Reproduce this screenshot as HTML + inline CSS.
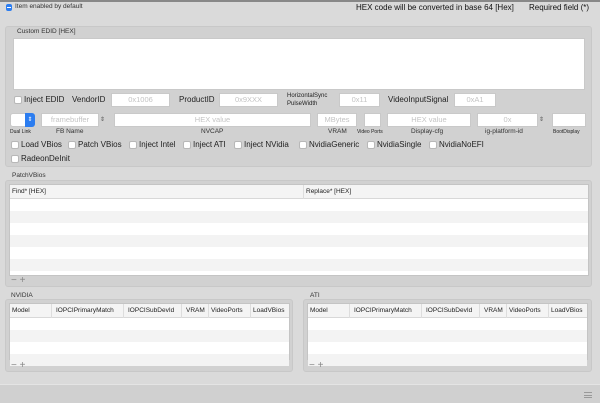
<!DOCTYPE html>
<html><head><meta charset="utf-8"><style>
*{margin:0;padding:0;box-sizing:border-box}
body{width:600px;height:403px;background:#dadada;font-family:"Liberation Sans",sans-serif;color:#222;position:relative;overflow:hidden}
.a{position:absolute;white-space:nowrap}
.box{position:absolute;background:#d1d1d1;border:1px solid #c8c8c8;border-radius:3px}
.in{position:absolute;background:#fff;border:1px solid #c9c9c9;color:#c4c4c4;font-size:7.5px;text-align:center;line-height:12px;height:14px}
.cb{position:absolute;width:8px;height:8px;background:#fff;border:1px solid #b8b8b8;border-radius:2px}
.t{font-size:8px;line-height:10px}
.s{font-size:6.5px;color:#333}
.tbl{position:absolute;background:#fff;border:1px solid #c4c4c4}
.hd{height:14px;background:#f4f4f4;border-bottom:1px solid #d8d8d8;font-size:6.5px;line-height:14px;position:relative}
.hd span{position:absolute;top:0;padding-left:4px;border-left:1px solid #ddd}
.r{height:12px}.r:nth-child(odd){background:#f3f3f3}
.pm{position:absolute;font-size:10px;color:#888}
</style></head><body>
<div class="a" style="left:0;top:0;width:600px;height:2px;background:#888"></div>
<div class="a" style="left:6px;top:4px;width:6px;height:7px;background:#2c7df0;border-radius:2px"></div>
<div class="a" style="left:7px;top:7px;width:4px;height:1px;background:#fff"></div>
<div class="a" style="left:15px;top:3px;font-size:6.5px;line-height:8px;color:#333">Item enabled by default</div>
<div class="a t" style="left:356px;top:3px;color:#111">HEX code will be converted in base 64 [Hex]</div>
<div class="a t" style="left:529px;top:3px;color:#111">Required field (*)</div>

<div class="box" style="left:5px;top:26px;width:587px;height:141px"></div>
<div class="a" style="left:17px;top:28px;font-size:6.5px;color:#333">Custom EDID [HEX]</div>
<div class="a" style="left:13px;top:38px;width:572px;height:52px;background:#fff;border:1px solid #c9c9c9"></div>
<div class="cb" style="left:14px;top:96px"></div>
<div class="a t" style="left:24px;top:95px">Inject EDID</div>
<div class="a t" style="left:72px;top:95px">VendorID</div>
<div class="in" style="left:111px;top:93px;width:59px">0x1006</div>
<div class="a t" style="left:179px;top:95px">ProductID</div>
<div class="in" style="left:219px;top:93px;width:59px">0x9XXX</div>
<div class="a" style="left:287px;top:92px;font-size:6px;line-height:8px">HorizontalSync<br>PulseWidth</div>
<div class="in" style="left:339px;top:93px;width:41px">0x11</div>
<div class="a t" style="left:388px;top:95px">VideoInputSignal</div>
<div class="in" style="left:454px;top:93px;width:42px">0xA1</div>

<div class="a" style="left:10px;top:113px;width:25px;height:14px;background:#fff;border:1px solid #c9c9c9;border-radius:3px"></div>
<div class="a" style="left:25px;top:113px;width:10px;height:14px;background:#2c7df0;border-radius:0 3px 3px 0;color:#fff;font-size:6px;text-align:center;line-height:14px">⇕</div>
<div class="in" style="left:41px;top:113px;width:58px">framebuffer</div>
<div class="a" style="left:100px;top:114px;font-size:6px;line-height:12px;color:#555">⇕</div>
<div class="in" style="left:114px;top:113px;width:197px">HEX value</div>
<div class="in" style="left:317px;top:113px;width:40px">MBytes</div>
<div class="in" style="left:364px;top:113px;width:17px"></div>
<div class="in" style="left:387px;top:113px;width:84px">HEX value</div>
<div class="in" style="left:477px;top:113px;width:61px">0x</div>
<div class="a" style="left:539px;top:114px;font-size:6px;line-height:12px;color:#555">⇕</div>
<div class="in" style="left:552px;top:113px;width:34px"></div>
<div class="a" style="left:10px;top:129px;font-size:5px">Dual Link</div>
<div class="a s" style="left:56px;top:128px">FB Name</div>
<div class="a s" style="left:201px;top:128px">NVCAP</div>
<div class="a s" style="left:328px;top:128px">VRAM</div>
<div class="a" style="left:357px;top:129px;font-size:5px">Video Ports</div>
<div class="a s" style="left:411px;top:128px">Display-cfg</div>
<div class="a s" style="left:485px;top:128px">ig-platform-id</div>
<div class="a" style="left:553px;top:129px;font-size:5px">BootDisplay</div>

<div class="cb" style="left:11px;top:141px"></div><div class="a t" style="left:21px;top:140px">Load VBios</div>
<div class="cb" style="left:68px;top:141px"></div><div class="a t" style="left:78px;top:140px">Patch VBios</div>
<div class="cb" style="left:129px;top:141px"></div><div class="a t" style="left:139px;top:140px">Inject Intel</div>
<div class="cb" style="left:183px;top:141px"></div><div class="a t" style="left:193px;top:140px">Inject ATI</div>
<div class="cb" style="left:234px;top:141px"></div><div class="a t" style="left:244px;top:140px">Inject NVidia</div>
<div class="cb" style="left:299px;top:141px"></div><div class="a t" style="left:309px;top:140px">NvidiaGeneric</div>
<div class="cb" style="left:367px;top:141px"></div><div class="a t" style="left:377px;top:140px">NvidiaSingle</div>
<div class="cb" style="left:429px;top:141px"></div><div class="a t" style="left:439px;top:140px">NvidiaNoEFI</div>
<div class="cb" style="left:11px;top:155px"></div><div class="a t" style="left:21px;top:154px">RadeonDeInit</div>

<div class="a" style="left:12px;top:172px;font-size:6.5px;color:#333">PatchVBios</div>
<div class="box" style="left:5px;top:180px;width:587px;height:107px"></div>
<div class="tbl" style="left:9px;top:184px;width:580px;height:92px">
<div class="hd"><span style="left:0;border:0;padding-left:2px">Find* [HEX]</span><span style="left:293px;padding-left:2px">Replace* [HEX]</span></div>
<div class="r"></div><div class="r"></div><div class="r"></div><div class="r"></div><div class="r"></div><div class="r"></div></div>
<div class="pm" style="left:11px;top:275px">− +</div>

<div class="a" style="left:11px;top:292px;font-size:6.5px;color:#333">NVIDIA</div>
<div class="box" style="left:5px;top:299px;width:288px;height:73px"></div>
<div class="tbl" style="left:9px;top:303px;width:281px;height:57px">
<div class="hd"><span style="left:0;border:0;padding-left:2px">Model</span><span style="left:41px">IOPCIPrimaryMatch</span><span style="left:113px">IOPCISubDevId</span><span style="left:171px;padding-left:4px">VRAM</span><span style="left:198px;padding-left:2px">VideoPorts</span><span style="left:240px;padding-left:2px">LoadVBios</span></div>
<div class="r" style="background:#fff"></div><div class="r" style="background:#f3f3f3"></div><div class="r" style="background:#fff"></div><div class="r" style="background:#f3f3f3"></div></div>
<div class="pm" style="left:11px;top:360px">− +</div>

<div class="a" style="left:310px;top:292px;font-size:6.5px;color:#333">ATI</div>
<div class="box" style="left:303px;top:299px;width:289px;height:73px"></div>
<div class="tbl" style="left:307px;top:303px;width:281px;height:57px">
<div class="hd"><span style="left:0;border:0;padding-left:2px">Model</span><span style="left:41px">IOPCIPrimaryMatch</span><span style="left:113px">IOPCISubDevId</span><span style="left:171px;padding-left:4px">VRAM</span><span style="left:198px;padding-left:2px">VideoPorts</span><span style="left:240px;padding-left:2px">LoadVBios</span></div>
<div class="r" style="background:#fff"></div><div class="r" style="background:#f3f3f3"></div><div class="r" style="background:#fff"></div><div class="r" style="background:#f3f3f3"></div></div>
<div class="pm" style="left:309px;top:360px">− +</div>

<div class="a" style="left:0;top:384px;width:600px;height:19px;background:#d0d0d0;border-top:1px solid #e4e4e4"></div>
<div class="a" style="left:584px;top:392px;width:8px;height:6px;border-top:1px solid #999;border-bottom:1px solid #999"></div>
<div class="a" style="left:584px;top:394.5px;width:8px;height:1px;background:#999"></div>
</body></html>
